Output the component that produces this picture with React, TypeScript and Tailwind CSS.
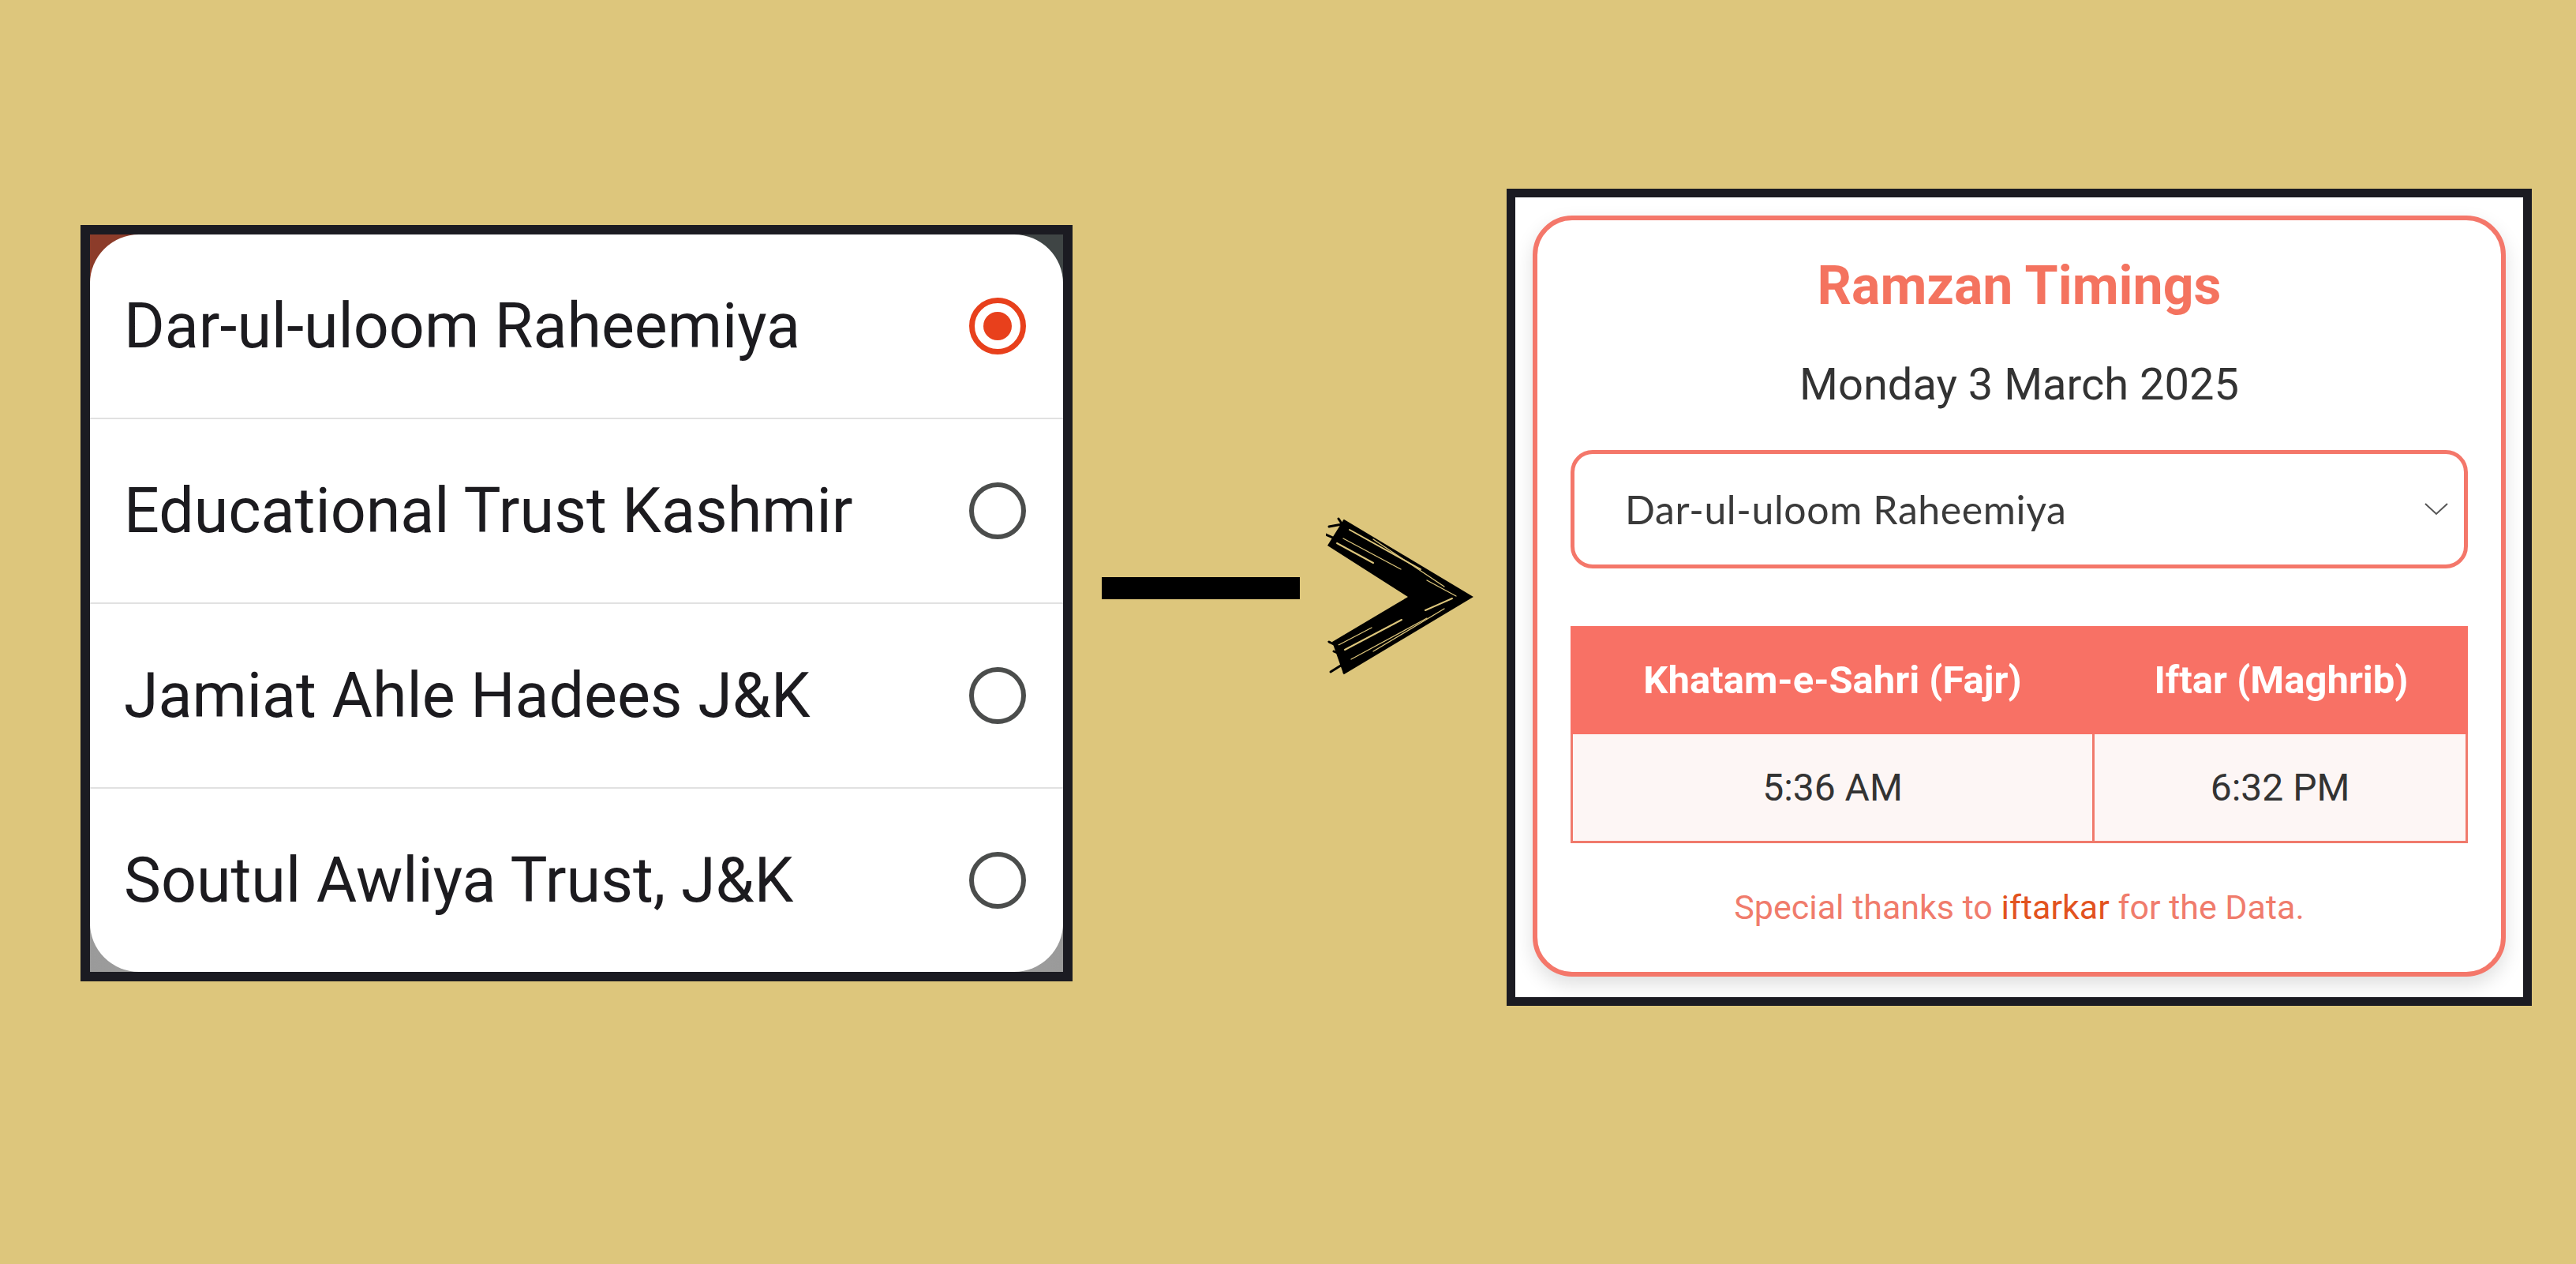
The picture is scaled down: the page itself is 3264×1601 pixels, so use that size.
import React from "react";

const trusts = [
  "Dar-ul-uloom Raheemiya",
  "Educational Trust Kashmir",
  "Jamiat Ahle Hadees J&K",
  "Soutul Awliya Trust, J&K",
];

const Radio: React.FC<{ checked: boolean }> = ({ checked }) =>
  checked ? (
    <div className="w-[72px] h-[72px] rounded-full border-[7px] border-[#e8401c] flex items-center justify-center">
      <div className="w-[36px] h-[36px] rounded-full bg-[#e8401c]" />
    </div>
  ) : (
    <div className="w-[72px] h-[72px] rounded-full border-[6px] border-[#4b4d4c]" />
  );

// hand drawn chevron: filled shape, scratched with a few light streaks
const Chevron: React.FC = () => {
  const streaks: [number, number, number, number][] = [
    [30, 16, 120, 66],
    [22, 27, 95, 66],
    [60, 28, 150, 88],
    [14, 33, 60, 58],
    [128, 80, 165, 100],
    [32, 180, 128, 128],
    [24, 168, 96, 130],
    [60, 170, 150, 116],
    [16, 162, 58, 140],
    [126, 118, 160, 103],
  ];
  const edges: [number, number, number, number][] = [
    [16, 2, 24, 14],
    [4, 12, 26, 8],
    [0, 22, 18, 30],
    [6, 196, 22, 186],
    [10, 170, 28, 178],
    [4, 158, 20, 166],
  ];
  return (
    <svg width="190" height="205" viewBox="0 0 190 205" className="shrink-0 mt-[655px] ml-[33px]">
      <polygon points="22,4 184,101 22,198 8,158 104,101 2,36" fill="#000" />
      <polyline points="22,4 184,101 22,198" fill="none" stroke="#000" strokeWidth="3" />
      {streaks.map(([x1, y1, x2, y2], i) => (
        <line key={i} x1={x1} y1={y1} x2={x2} y2={y2} stroke="#ddc67c" strokeWidth={i % 3 === 0 ? 2 : 1.3} strokeLinecap="round" />
      ))}
      {edges.map(([x1, y1, x2, y2], i) => (
        <line key={`e${i}`} x1={x1} y1={y1} x2={x2} y2={y2} stroke="#000" strokeWidth="3" strokeLinecap="round" />
      ))}
    </svg>
  );
};

const App: React.FC = () => {
  return (
    <div className="w-[3264px] h-[1601px] overflow-hidden bg-[#ddc67c] flex items-start font-[Roboto,'Liberation_Sans',sans-serif]">
      {/* left: phone list */}
      <div className="shrink-0 mt-[285px] ml-[102px] w-[1257px] h-[958px] border-[12px] border-[#1b1b22] [background:linear-gradient(90deg,#8c3c2a_50%,#3f4545_50%)_top/100%_50%_no-repeat,linear-gradient(90deg,#9a9a9a,#b8b8b8_50%,#9a9a9a)]">
        <div className="h-full rounded-[62px] bg-white flex flex-col overflow-hidden">
          {trusts.map((t, i) => (
            <div
              key={t}
              className={`flex-1 flex items-center justify-between pl-[43px] pr-[47px] ${i > 0 ? "border-t-2 border-[#e1e1e1]" : ""}`}
            >
              <span className="text-[79px] leading-none text-[#1c1b1f]">{t}</span>
              <Radio checked={i === 0} />
            </div>
          ))}
        </div>
      </div>

      {/* arrow */}
      <div className="shrink-0 mt-[731px] ml-[37px] w-[251px] h-[28px] bg-black" />
      <Chevron />

      {/* right: web card */}
      <div className="shrink-0 mt-[239px] ml-[39px] w-[1299px] h-[1035px] border-[11px] border-[#1b1b22] bg-white pt-[23px] px-[22px] pb-[26px]">
        <div className="h-full rounded-[50px] border-[6px] border-[#f4776a] bg-white shadow-[0_10px_24px_rgba(0,0,0,0.13)] flex flex-col items-center px-[42px]">
          <h1 className="mt-[43px] text-[68px] leading-[80px] font-bold text-[#f4735f]">Ramzan Timings</h1>
          <p className="mt-[50px] text-[56px] leading-[70px] text-[#333333]">Monday 3 March 2025</p>

          <div className="mt-[48px] w-full h-[150px] rounded-[28px] border-[5px] border-[#f4776a] flex items-center justify-between pl-[64px] pr-[19px]">
            <span className="font-[Lato,sans-serif] text-[50px] tracking-[0.6px] text-[#3a3a3a]">Dar-ul-uloom Raheemiya</span>
            <svg width="32" height="18" viewBox="0 0 32 18" fill="none" stroke="#555" strokeWidth="2">
              <polyline points="2,2 16,15 30,2" />
            </svg>
          </div>

          <div className="mt-[73px] w-full grid grid-cols-[664px_1fr]">
            <div className="h-[137px] bg-[#f87165] flex items-center justify-center text-white font-bold text-[49px]">
              Khatam-e-Sahri (Fajr)
            </div>
            <div className="h-[137px] bg-[#f87165] flex items-center justify-center text-white font-bold text-[49px]">
              Iftar (Maghrib)
            </div>
            <div className="h-[138px] bg-[#fdf6f5] border-[3px] border-t-0 border-[#f07a6c] flex items-center justify-center text-[48px] text-[#333333]">
              5:36 AM
            </div>
            <div className="h-[138px] bg-[#fdf6f5] border-[3px] border-t-0 border-l-0 border-[#f07a6c] flex items-center justify-center text-[48px] text-[#333333]">
              6:32 PM
            </div>
          </div>

          <p className="mt-[51px] text-[43px] leading-[60px] text-[#f07c6c]">
            Special thanks to <span className="text-[#e2531f]">iftarkar</span> for the Data.
          </p>
        </div>
      </div>
    </div>
  );
};

export default App;
